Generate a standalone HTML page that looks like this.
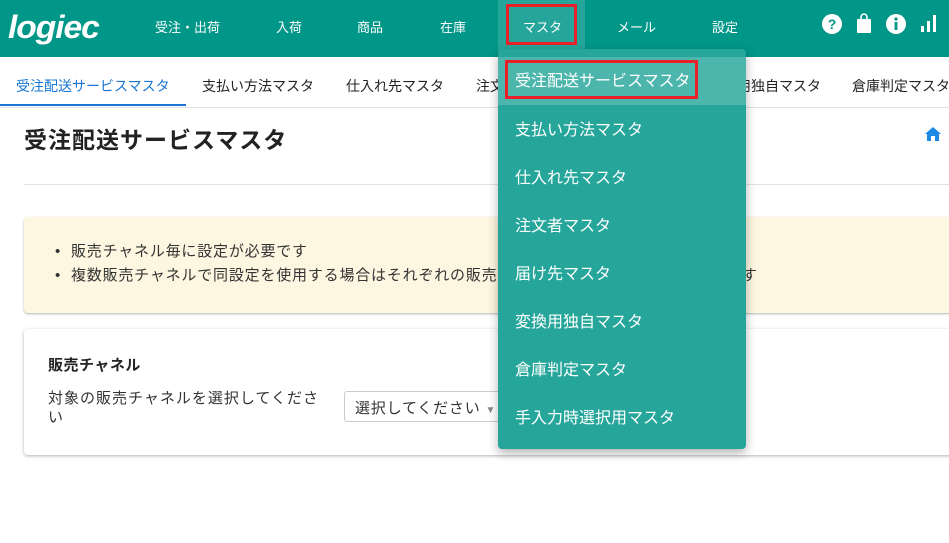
<!DOCTYPE html>
<html><head><meta charset="utf-8"><style>
*{margin:0;padding:0;box-sizing:border-box}
body{width:949px;height:543px;overflow:hidden;background:#fff;font-family:"Liberation Sans","Noto Sans CJK JP",sans-serif;position:relative;color:#222}
.hdr{position:absolute;left:0;top:0;width:949px;height:57px;background:#009688}
.nav{position:absolute;top:17px;color:#fff;font-size:13px}
.logo{position:absolute;left:8px;top:9px;color:#fff;font-size:32px;font-weight:bold;font-style:italic;letter-spacing:-1px;transform:scaleX(1.05);transform-origin:left}
.tabs{position:absolute;top:57px;left:0;width:949px;height:51px;border-bottom:1px solid #e0e0e0}
.tab{position:absolute;top:19px;font-size:14px;color:#222;white-space:nowrap}
.dd{position:absolute;left:498px;top:49px;width:248px;height:400px;background:#26a69a;border-radius:4px;box-shadow:0 4px 10px rgba(0,0,0,.3)}
.it{position:absolute;left:17px;color:#fff;font-size:16px;white-space:nowrap}
.red{position:absolute;border:3px solid #e8202a}
</style></head><body>
<div class="hdr">
<div class="logo">logiec</div>
<div class="nav" style="left:155px">受注・出荷</div>
<div class="nav" style="left:276px">入荷</div>
<div class="nav" style="left:357px">商品</div>
<div class="nav" style="left:440px">在庫</div>
<div style="position:absolute;left:498px;top:0;width:87px;height:50px;background:#26a69a"></div>
<div class="nav" style="left:523px">マスタ</div>
<div class="nav" style="left:617px">メール</div>
<div class="nav" style="left:712px">設定</div>
<svg style="position:absolute;left:822px;top:14px" width="20" height="20"><circle cx="10" cy="10" r="10" fill="#fff"/><text x="10" y="15" text-anchor="middle" font-size="14" font-weight="bold" fill="#009688" font-family="Liberation Sans">?</text></svg>
<svg style="position:absolute;left:856px;top:13px" width="16" height="20"><rect x="1" y="6" width="14" height="14" rx="1" fill="#fff"/><path d="M5 8V4a3 3 0 0 1 6 0v4" stroke="#fff" stroke-width="1.6" fill="none"/></svg>
<svg style="position:absolute;left:886px;top:14px" width="20" height="20"><circle cx="10" cy="10" r="10" fill="#fff"/><rect x="8.6" y="8" width="2.8" height="8" fill="#009688"/><circle cx="10" cy="5" r="1.6" fill="#009688"/></svg>
<svg style="position:absolute;left:920px;top:14px" width="16" height="18"><rect x="1" y="12" width="3" height="6" fill="#fff"/><rect x="7" y="7" width="3" height="11" fill="#fff"/><rect x="13" y="1" width="3" height="17" fill="#fff"/></svg>
</div>
<div class="red" style="left:506px;top:4px;width:71px;height:41px"></div>
<div class="tabs">
<div class="tab" style="left:16px;color:#1976d2">受注配送サービスマスタ</div>
<div style="position:absolute;left:0;top:47px;width:186px;height:2px;background:#1976d2"></div>
<div class="tab" style="left:202px">支払い方法マスタ</div>
<div class="tab" style="left:346px">仕入れ先マスタ</div>
<div class="tab" style="left:476px">注文</div>
<div class="tab" style="left:737px">用独自マスタ</div>
<div class="tab" style="left:852px">倉庫判定マスタ</div>
</div>
<div style="position:absolute;left:24px;top:121px;font-size:23px;letter-spacing:1px;font-weight:bold">受注配送サービスマスタ</div>
<svg style="position:absolute;left:925px;top:127px" width="16" height="14"><path d="M8 0L0 7h2v7h4V9h4v5h4V7h2z" fill="#1e88e5"/></svg>
<div style="position:absolute;left:24px;top:184px;width:925px;height:1px;background:#e0e0e0"></div>
<div style="position:absolute;left:24px;top:217px;width:930px;height:96px;background:#fdf6e0;border-radius:4px;box-shadow:0 1px 2px rgba(0,0,0,.3)">
<div style="position:absolute;left:31px;top:23px;font-size:15px;letter-spacing:0.8px;line-height:24px;color:#333">• &nbsp;販売チャネル毎に設定が必要です<br>• &nbsp;複数販売チャネルで同設定を使用する場合はそれぞれの販売<span style="position:absolute;left:687px">す</span></div>
</div>
<div style="position:absolute;left:24px;top:329px;width:930px;height:126px;background:#fff;border-radius:4px;box-shadow:0 1px 3px rgba(0,0,0,.3)">
<div style="position:absolute;left:24px;top:25px;font-size:15px;font-weight:bold;letter-spacing:0.5px">販売チャネル</div>
<div style="position:absolute;left:24px;top:60px;width:275px;font-size:15px;letter-spacing:1px;line-height:19px;color:#333">対象の販売チャネルを選択してください</div>
<div style="position:absolute;left:320px;top:62px;width:200px;height:31px;border:1px solid #ccc;border-radius:3px;font-size:15px;letter-spacing:0.8px;padding:5px 10px;color:#333;white-space:nowrap">選択してください <span style="color:#888;font-size:10px">▼</span></div>
</div>
<div class="dd">
<div style="position:absolute;left:0;top:8px;width:248px;height:48px;background:#4db6ac"></div>
<div class="it" style="top:18px">受注配送サービスマスタ</div>
<div class="it" style="top:67px">支払い方法マスタ</div>
<div class="it" style="top:115px">仕入れ先マスタ</div>
<div class="it" style="top:163px">注文者マスタ</div>
<div class="it" style="top:211px">届け先マスタ</div>
<div class="it" style="top:259px">変換用独自マスタ</div>
<div class="it" style="top:307px">倉庫判定マスタ</div>
<div class="it" style="top:355px">手入力時選択用マスタ</div>
</div>
<div class="red" style="left:505px;top:60px;width:193px;height:39px"></div>
</body></html>
